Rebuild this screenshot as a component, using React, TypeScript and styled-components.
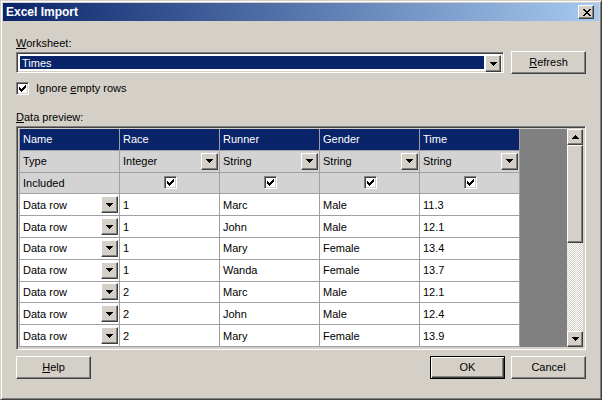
import React from 'react'
import styled, { createGlobalStyle, css } from 'styled-components'

const GlobalStyle = createGlobalStyle`
    body {
        margin: 0;
        font-family: 'Liberation Sans', Arial, sans-serif;
        font-size: 11px;
        color: #000;
        background: #d4d0c8;
    }
`

const face = '#d4d0c8'
const navy = '#0a246a'
const gridLine = '#a0a0a0'

const raised = css`
    box-sizing: border-box;
    background: ${face};
    border: 1px solid;
    border-color: #fff #404040 #404040 #fff;
    box-shadow: inset -1px -1px #808080, inset 1px 1px ${face};
`

const sunken = css`
    box-sizing: border-box;
    border: 1px solid;
    border-color: #808080 #fff #fff #808080;
    box-shadow: inset 1px 1px #404040, inset -1px -1px ${face};
`

const Window = styled.div`
    box-sizing: border-box;
    width: 602px;
    height: 400px;
    padding: 2px;
    background: ${face};
    border: 1px solid;
    border-color: ${face} #404040 #404040 ${face};
    box-shadow: inset 1px 1px #fff, inset -1px -1px #808080;
    display: flex;
    flex-direction: column;
`

const TitleBar = styled.div`
    height: 18px;
    display: flex;
    align-items: center;
    justify-content: space-between;
    padding: 0 5px 0 3px;
    background: linear-gradient(to right, ${navy}, #a6caf0);
    color: #fff;
    font-weight: bold;
    font-size: 12px;
`

const CloseButton = styled.div`
    ${raised};
    width: 16px;
    height: 14px;
    display: flex;
    align-items: center;
    justify-content: center;
    padding-left: 1px;
`

const Body = styled.div`
    flex: 1;
    display: flex;
    flex-direction: column;
    padding: 16px 13px 0;
`

const Label = styled.div<{ $gap?: number }>`
    line-height: 13px;
    height: 13px;
    margin-bottom: ${p => p.$gap ?? 0}px;
`

const WorksheetRow = styled.div`
    display: flex;
    align-items: center;
    gap: 7px;
    margin-top: 1px;
`

const Combo = styled.div`
    ${sunken};
    width: 488px;
    height: 21px;
    padding: 2px;
    background: #fff;
    display: flex;
`

const ComboText = styled.div`
    flex: 1;
    margin: 1px;
    padding-left: 2px;
    background: ${navy};
    color: #fff;
    line-height: 15px;
`

const DropButton = styled.div<{ $w?: number; $h?: number }>`
    ${raised};
    width: ${p => p.$w ?? 16}px;
    height: ${p => p.$h ?? 17}px;
    flex: none;
    display: flex;
    align-items: center;
    justify-content: center;
`

const Button = styled.div<{ $default?: boolean }>`
    ${raised};
    width: 75px;
    height: 23px;
    display: flex;
    align-items: center;
    justify-content: center;
    line-height: 13px;
    ${p => p.$default && css`
        border-color: #000;
        box-shadow: inset 1px 1px #fff, inset -1px -1px #404040, inset -2px -2px #808080;
    `}
`

const CheckRow = styled.div`
    display: flex;
    align-items: center;
    gap: 7px;
    margin: 8px 0 16px;
    line-height: 13px;
`

const CheckBox = styled.div`
    ${sunken};
    width: 13px;
    height: 13px;
    background: #fff;
    display: flex;
    align-items: center;
    justify-content: center;
    flex: none;
`

const GridFrame = styled.div`
    ${sunken};
    margin-top: 2px;
    width: 570px;
    height: 224px;
    padding: 2px;
    display: flex;
`

const Table = styled.div`
    width: 501px;
    box-sizing: border-box;
    border-left: 1px solid ${gridLine};
    display: flex;
    flex-direction: column;
    background: #fff;
`

type RowKind = 'header' | 'meta' | 'data'

const Row = styled.div<{ $kind: RowKind }>`
    display: flex;
    height: 22px;
    box-sizing: border-box;
    border-bottom: 1px solid ${gridLine};
    background: ${p => (p.$kind === 'header' ? navy : p.$kind === 'meta' ? '#d3d3d3' : '#fff')};
    color: ${p => (p.$kind === 'header' ? '#fff' : '#000')};
`

const Cell = styled.div<{ $center?: boolean }>`
    width: 100px;
    box-sizing: border-box;
    border-right: 1px solid ${gridLine};
    display: flex;
    align-items: center;
    justify-content: ${p => (p.$center ? 'center' : 'space-between')};
    padding: 0 1px 0 3px;
    white-space: nowrap;
`

const Filler = styled.div`
    flex: 1;
    background: #808080;
`

const ScrollBar = styled.div`
    width: 16px;
    display: flex;
    flex-direction: column;
`

const Thumb = styled.div`
    ${raised};
    height: 98px;
`

const Track = styled.div`
    flex: 1;
    background-color: #fff;
    background-image: repeating-conic-gradient(${face} 0 25%, #fff 0 50%);
    background-size: 2px 2px;
`

const Footer = styled.div`
    display: flex;
    margin-top: 6px;
    gap: 6px;
    & > :first-child {
        margin-right: auto;
    }
`

const Pixels: React.FC<{ w: number; h: number; d: string }> = ({ w, h, d }) => (
    <svg width={w} height={h} viewBox={`0 0 ${w} ${h}`} shapeRendering="crispEdges">
        <path d={d} fill="#000" />
    </svg>
)

const ArrowDown = () => <Pixels w={7} h={4} d="M0 0h7v1H0z M1 1h5v1H1z M2 2h3v1H2z M3 3h1v1H3z" />
const ArrowUp = () => <Pixels w={7} h={4} d="M3 0h1v1H3z M2 1h3v1H2z M1 2h5v1H1z M0 3h7v1H0z" />
const CloseGlyph = () => (
    <Pixels
        w={8}
        h={7}
        d="M0 0h2v1H0z M6 0h2v1H6z M1 1h2v1H1z M5 1h2v1H5z M2 2h4v1H2z M3 3h2v1H3z M2 4h4v1H2z M1 5h2v1H1z M5 5h2v1H5z M0 6h2v1H0z M6 6h2v1H6z"
    />
)
const CheckGlyph = () => (
    <Pixels
        w={7}
        h={7}
        d="M6 0h1v1H6z M5 1h2v1H5z M0 2h1v1H0z M4 2h3v1H4z M0 3h2v1H0z M3 3h3v1H3z M0 4h5v1H0z M1 5h3v1H1z M2 6h1v1H2z"
    />
)

const Check = () => (
    <CheckBox>
        <CheckGlyph />
    </CheckBox>
)

const columns = ['Name', 'Race', 'Runner', 'Gender', 'Time']
const types = ['Integer', 'String', 'String', 'String']
const rows = [
    ['1', 'Marc', 'Male', '11.3'],
    ['1', 'John', 'Male', '12.1'],
    ['1', 'Mary', 'Female', '13.4'],
    ['1', 'Wanda', 'Female', '13.7'],
    ['2', 'Marc', 'Male', '12.1'],
    ['2', 'John', 'Male', '12.4'],
    ['2', 'Mary', 'Female', '13.9'],
]

const ComboCell: React.FC<{ text: string }> = ({ text }) => (
    <Cell>
        <span>{text}</span>
        <DropButton $w={17} $h={17}>
            <ArrowDown />
        </DropButton>
    </Cell>
)

const PreviewGrid: React.FC = () => (
    <GridFrame>
        <Table>
            <Row $kind="header">
                {columns.map(c => <Cell key={c}>{c}</Cell>)}
            </Row>
            <Row $kind="meta">
                <Cell>Type</Cell>
                {types.map((t, i) => <ComboCell key={i} text={t} />)}
            </Row>
            <Row $kind="meta">
                <Cell>Included</Cell>
                {types.map((_, i) => (
                    <Cell key={i} $center>
                        <Check />
                    </Cell>
                ))}
            </Row>
            {rows.map((r, i) => (
                <Row $kind="data" key={i}>
                    <ComboCell text="Data row" />
                    {r.map((v, j) => <Cell key={j}>{v}</Cell>)}
                </Row>
            ))}
        </Table>
        <Filler />
        <ScrollBar>
            <DropButton $h={16}>
                <ArrowUp />
            </DropButton>
            <Thumb />
            <Track />
            <DropButton $h={16}>
                <ArrowDown />
            </DropButton>
        </ScrollBar>
    </GridFrame>
)

const App: React.FC = () => {
    return (
        <>
            <GlobalStyle />
            <Window>
                <TitleBar>
                    <span>Excel Import</span>
                    <CloseButton>
                        <CloseGlyph />
                    </CloseButton>
                </TitleBar>
                <Body>
                    <Label>
                        <u>W</u>orksheet:
                    </Label>
                    <WorksheetRow>
                        <Combo>
                            <ComboText>Times</ComboText>
                            <DropButton>
                                <ArrowDown />
                            </DropButton>
                        </Combo>
                        <Button>
                            <span>
                                <u>R</u>efresh
                            </span>
                        </Button>
                    </WorksheetRow>
                    <CheckRow>
                        <Check />
                        <span>
                            Ignore <u>e</u>mpty rows
                        </span>
                    </CheckRow>
                    <Label>
                        <u>D</u>ata preview:
                    </Label>
                    <PreviewGrid />
                    <Footer>
                        <Button>
                            <span>
                                <u>H</u>elp
                            </span>
                        </Button>
                        <Button $default>OK</Button>
                        <Button>Cancel</Button>
                    </Footer>
                </Body>
            </Window>
        </>
    )
}

export default App
